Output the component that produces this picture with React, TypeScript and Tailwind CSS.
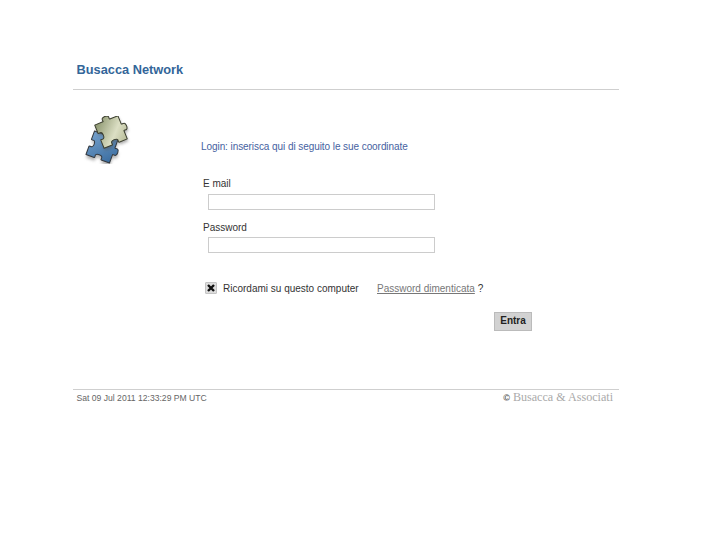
const PIECE =
  "M0 0H7c1.2 0-1.6-3.4 3-3.4s1.8 3.4 3 3.4H20V7c0 1.2 3.4-1.6 3.4 3s-3.4 1.8-3.4 3V20H13c-1.2 0 1.6-3.4-3-3.4s-1.8 3.4-3 3.4H0V13c0-1.2 3.4 1.6 3.4-3s-3.4-1.8-3.4-3Z";

export default function App() {
  return (
    <div className="min-h-[545px] bg-white pl-[73px] font-['Liberation_Sans',Arial,sans-serif]">
      <div className="w-[546px]">
        {/* Header */}
        <div className="h-[90px] border-b border-[#cfcfcf] pl-[3.5px] pt-[62px]">
          <h1 className="text-[12.8px] leading-[16px] font-bold text-[#336699]">Busacca Network</h1>
        </div>

        {/* Body */}
        <div className="flex h-[299px]">
          <div className="w-[128px] shrink-0 pl-[10px] pt-[26px]">
            <svg width="48" height="48" viewBox="0 0 48 48">
              <defs>
                <linearGradient id="blue" x1="0" y1="0" x2="1" y2="1">
                  <stop offset="0" stopColor="#7ba6d0" />
                  <stop offset="1" stopColor="#35689c" />
                </linearGradient>
                <linearGradient id="olive" x1="0" y1="0" x2="1" y2="1">
                  <stop offset="0" stopColor="#7f8a62" />
                  <stop offset="0.6" stopColor="#dcdfc4" />
                  <stop offset="1" stopColor="#aeb38e" />
                </linearGradient>
                <filter id="soft" x="-20%" y="-20%" width="140%" height="140%">
                  <feGaussianBlur stdDeviation="1.2" />
                </filter>
              </defs>
              <g transform="translate(19 31) rotate(20) scale(1.25) translate(-10 -10)">
                <path d={PIECE} fill="#777777" opacity="0.55" filter="url(#soft)" transform="translate(1 2.5)" />
                <path d={PIECE} fill="url(#blue)" stroke="#33383e" strokeWidth="0.8" strokeLinejoin="round" />
              </g>
              <g transform="translate(28 16) rotate(-22) scale(1.25) translate(-10 -10)">
                <path d={PIECE} fill="#555555" opacity="0.5" filter="url(#soft)" transform="translate(0 2)" />
                <path d={PIECE} fill="url(#olive)" stroke="#3a3d2e" strokeWidth="0.8" strokeLinejoin="round" />
              </g>
            </svg>
          </div>

          <div className="flex-1 pt-[50px]">
            <p className="text-[10px] tracking-[-0.07px] leading-[14px] text-[#46629f]">Login: inserisca qui di seguito le sue coordinate</p>

            <label className="mt-[23px] ml-[2px] block text-[10px] leading-[14px] text-[#333333]">E mail</label>
            <input type="text" className="mt-[3px] ml-[7px] block h-[16px] w-[227px] border border-[#cccccc] bg-white" />

            <label className="mt-[11px] ml-[2px] block text-[10px] leading-[14px] text-[#333333]">Password</label>
            <input type="password" className="mt-[2px] ml-[7px] block h-[16px] w-[227px] border border-[#cccccc] bg-white" />

            <div className="mt-[28px] ml-[4px] flex h-[14px] items-center text-[10px] text-[#333333]">
              <span className="flex h-[12px] w-[12px] items-center justify-center rounded-[1px] border border-[#c4c4c4] bg-[#dddddd]">
                <svg width="8" height="8" viewBox="0 0 8 8">
                  <path d="M1 1l6 6M7 1L1 7" stroke="#111111" strokeWidth="2.4" />
                </svg>
              </span>
              <span className="ml-[6px] w-[154px] pt-[1px]">Ricordami su questo computer</span>
              <a className="pt-[1px] text-[#777777] underline">Password dimenticata</a>
              <span className="ml-[3px] pt-[1px]">?</span>
            </div>

            <div className="mt-[17px] ml-[293px]">
              <button className="block h-[19px] w-[38px] border border-[#bbbbbb] bg-[#d2d2d2] pb-[2px] text-[10px] font-bold text-[#222222]">Entra</button>
            </div>
          </div>
        </div>

        {/* Footer */}
        <div className="flex items-start justify-between border-t border-[#cfcfcf] pr-[6px] pl-[3.5px]">
          <span className="pt-[2px] text-[8.6px] leading-[12px] text-[#666666]">Sat 09 Jul 2011 12:33:29 PM UTC</span>
          <span className="flex items-baseline gap-[3px] font-['Liberation_Serif',serif] text-[12.1px] leading-[15px] text-[#aaaaaa]">
            <span className="font-['Liberation_Sans',sans-serif] text-[9px] font-bold text-[#555555]">©</span>
            Busacca &amp; Associati
          </span>
        </div>
      </div>
    </div>
  );
}
